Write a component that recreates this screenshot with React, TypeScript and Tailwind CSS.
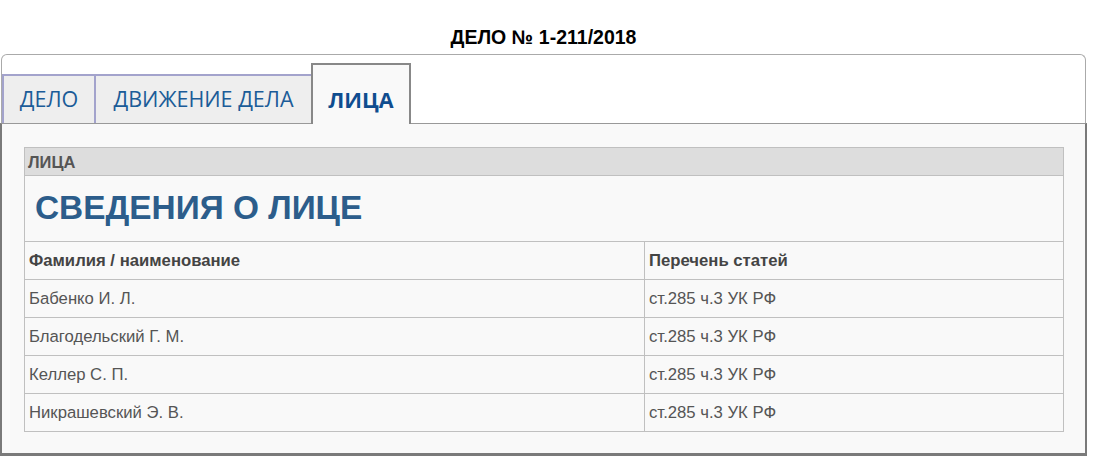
import React from 'react';

const people = [
  { name: 'Бабенко И. Л.', articles: 'ст.285 ч.3 УК РФ' },
  { name: 'Благодельский Г. М.', articles: 'ст.285 ч.3 УК РФ' },
  { name: 'Келлер С. П.', articles: 'ст.285 ч.3 УК РФ' },
  { name: 'Никрашевский Э. В.', articles: 'ст.285 ч.3 УК РФ' },
];

export default function App() {
  return (
    <div className="w-[1093px] h-[463px] bg-white font-['Liberation_Sans',Arial,sans-serif] overflow-hidden">
      {/* Title */}
      <div className="pt-[26px] h-[54px] w-[1087px] text-center">
        <h1 className="text-[19.5px] leading-[22px] font-bold text-black">ДЕЛО № 1-211/2018</h1>
      </div>

      <div className="w-[1087px]">
        {/* Tab bar */}
        <div className="mx-[1px] h-[69px] border border-b-0 border-[#aaaaaa] rounded-t-[6px] flex items-end font-['Open_Sans',sans-serif]">
          <div className="w-[92px] h-[49px] flex items-center justify-center bg-[#eeeeee] border-2 border-b-0 border-r-0 border-[#a3a3cc] text-[21.5px] text-[#1b5c98]">
            ДЕЛО
          </div>
          <div className="w-[217px] h-[49px] flex items-center justify-center bg-[#eeeeee] border-2 border-b-0 border-r-0 border-[#a3a3cc] text-[21.5px] text-[#1b5c98]">
            ДВИЖЕНИЕ ДЕЛА
          </div>
          <div className="w-[100px] h-[61px] flex items-center justify-center bg-[#f9f9f9] border-2 border-b-0 border-[#888888] text-[21.5px] font-bold text-[#0f4d8f] -mb-[1px] relative z-10 pt-[12px]">
            ЛИЦА
          </div>
          <div className="flex-1" />
        </div>

        {/* Panel */}
        <div className="border-t border-t-[#999999] border-x-2 border-b-[3px] border-[#7a7a7a] bg-[#f9f9f9] pt-[23px] pb-[21px] pl-[22px] pr-[21px]">
          <table className="w-full border-collapse text-[16.7px] text-[#555555]">
            <colgroup>
              <col className="w-[620px]" />
              <col />
            </colgroup>
            <tbody>
              <tr>
                <td colSpan={2} className="h-[28px] bg-[#dddddd] border border-[#c0c0c0] px-[3px] text-[16.5px] leading-[18px] font-bold text-[#555555]">
                  ЛИЦА
                </td>
              </tr>
              <tr>
                <td colSpan={2} className="h-[66px] border border-[#c0c0c0] px-[10px] text-[33.4px] font-bold text-[#2c5d8b]">
                  СВЕДЕНИЯ О ЛИЦЕ
                </td>
              </tr>
              <tr>
                <td className="h-[38px] border border-[#c0c0c0] px-[4px] font-bold text-[#444444]">Фамилия / наименование</td>
                <td className="h-[38px] border border-[#c0c0c0] px-[4px] font-bold text-[#444444]">Перечень статей</td>
              </tr>
              {people.map((p) => (
                <tr key={p.name}>
                  <td className="h-[38px] border border-[#c0c0c0] px-[4px]">{p.name}</td>
                  <td className="h-[38px] border border-[#c0c0c0] px-[4px]">{p.articles}</td>
                </tr>
              ))}
            </tbody>
          </table>
        </div>
      </div>
    </div>
  );
}
